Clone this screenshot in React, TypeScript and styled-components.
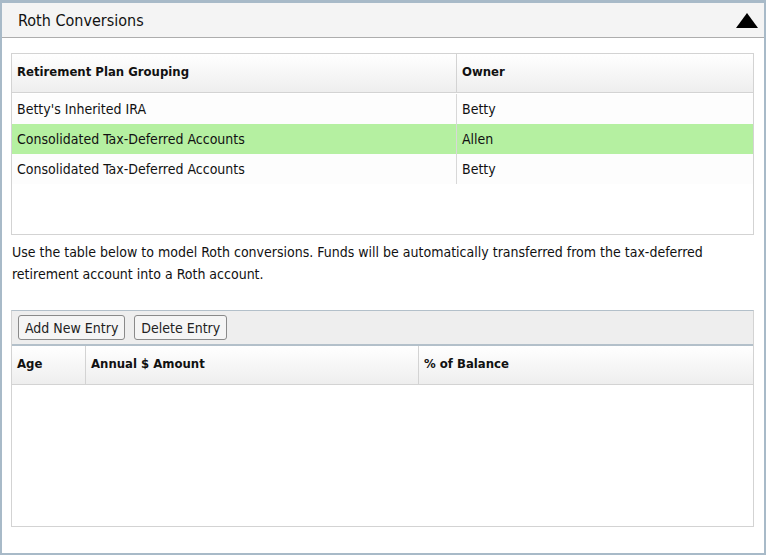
import styled, { createGlobalStyle } from 'styled-components';

const GlobalStyle = createGlobalStyle`
  body {
    margin: 0;
    background: #ffffff;
    font-family: "DejaVu Sans Condensed", "DejaVu Sans", sans-serif;
    color: #111;
  }
`;

const Panel = styled.section`
  width: 762px;
  height: 550px;
  border: 2px solid #a8bac8;
  border-top-width: 3px;
  display: flex;
  flex-direction: column;
  background: #fff;
`;

const PanelHeader = styled.header`
  height: 34px;
  flex: none;
  display: flex;
  align-items: center;
  justify-content: space-between;
  padding: 0 6px 0 16px;
  background: #f4f4f4;
  border-bottom: 1px solid #adadad;
`;

const PanelTitle = styled.h2`
  margin: 0;
  font-size: 16px;
  font-weight: 400;
  color: #111;
`;

const Body = styled.div`
  flex: 1;
  padding: 15px 10px 0 9px;
  display: flex;
  flex-direction: column;
`;

const Grid = styled.div<{ $height: number }>`
  height: ${(p) => p.$height}px;
  border: 1px solid #d3d3d3;
  display: flex;
  flex-direction: column;
  box-sizing: border-box;
`;

const ToolGrid = styled(Grid)`
  border-top-color: #b3c0ca;
`;

const Toolbar = styled.div`
  height: 33px;
  flex: none;
  display: flex;
  align-items: center;
  gap: 9px;
  padding: 0 6px;
  background: #eeeeee;
  border-bottom: 2px solid #b3c0ca;
`;

const ToolButton = styled.button`
  font-family: inherit;
  font-size: 14px;
  color: #222;
  height: 25px;
  padding: 0 6px;
  background: #f5f5f5;
  border: 1px solid #8a8a8a;
  border-radius: 3px;
`;

const HeadRow = styled.div<{ $cols: string }>`
  display: grid;
  grid-template-columns: ${(p) => p.$cols};
  height: 38px;
  flex: none;
  background: linear-gradient(#ffffff, #eeeeee);
  border-bottom: 1px solid #d3d3d3;
`;

const HeadCell = styled.div`
  display: flex;
  align-items: center;
  padding: 0 5px 4px;
  font-size: 13px;
  font-weight: 700;
  & + & {
    border-left: 1px solid #d3d3d3;
  }
`;

const DataRow = styled.div<{ $cols: string; $selected?: boolean }>`
  display: grid;
  grid-template-columns: ${(p) => p.$cols};
  height: 30px;
  background: ${(p) => (p.$selected ? '#b5f0a1' : '#fdfdfd')};
`;

const DataCell = styled.div`
  display: flex;
  align-items: center;
  padding: 0 5px;
  font-size: 14px;
  & + & {
    border-left: 1px solid #d8d8d8;
  }
`;

const RowsArea = styled.div`
  padding-top: 1px;
`;

const Note = styled.p`
  margin: 6px 0 0 1px;
  font-size: 14px;
  line-height: 22px;
  height: 69px;
`;

const planCols = '444px 1fr';
const convCols = '73px 333px 1fr';

const plans = [
  { name: "Betty's Inherited IRA", owner: 'Betty' },
  { name: 'Consolidated Tax-Deferred Accounts', owner: 'Allen', selected: true },
  { name: 'Consolidated Tax-Deferred Accounts', owner: 'Betty' },
];

function App() {
  return (
    <>
      <GlobalStyle />
      <Panel>
        <PanelHeader>
          <PanelTitle>Roth Conversions</PanelTitle>
          <svg width="22" height="15" viewBox="0 0 22 15">
            <polygon points="11,0 22,15 0,15" fill="#000" />
          </svg>
        </PanelHeader>
        <Body>
          <Grid $height={182}>
            <HeadRow $cols={planCols}>
              <HeadCell>Retirement Plan Grouping</HeadCell>
              <HeadCell>Owner</HeadCell>
            </HeadRow>
            <RowsArea>
              {plans.map((p, i) => (
                <DataRow key={i} $cols={planCols} $selected={p.selected}>
                  <DataCell>{p.name}</DataCell>
                  <DataCell>{p.owner}</DataCell>
                </DataRow>
              ))}
            </RowsArea>
          </Grid>
          <Note>
            Use the table below to model Roth conversions. Funds will be automatically
            transferred from the tax-deferred retirement account into a Roth account.
          </Note>
          <ToolGrid $height={217}>
            <Toolbar>
              <ToolButton>Add New Entry</ToolButton>
              <ToolButton>Delete Entry</ToolButton>
            </Toolbar>
            <HeadRow $cols={convCols}>
              <HeadCell>Age</HeadCell>
              <HeadCell>Annual $ Amount</HeadCell>
              <HeadCell>% of Balance</HeadCell>
            </HeadRow>
          </ToolGrid>
        </Body>
      </Panel>
    </>
  );
}

export default App;
